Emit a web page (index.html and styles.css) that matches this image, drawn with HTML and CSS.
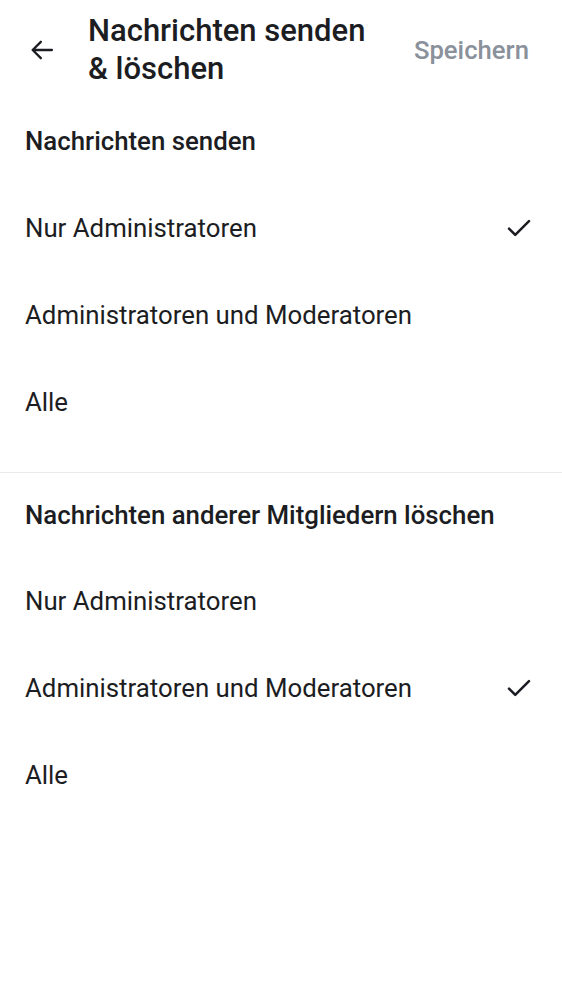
FILE: index.html
```html
<!DOCTYPE html>
<html lang="de">
<head>
<meta charset="utf-8">
<link rel="stylesheet" href="styles.css">
</head>
<body>
<header class="topbar">
  <button class="back" aria-label="Zurück">
    <svg width="28" height="28" viewBox="0 0 24 24" fill="none" stroke="#1c1d22" stroke-width="2" stroke-linecap="round" stroke-linejoin="round"><path d="M20.5 12H4M11 5l-7 7 7 7"/></svg>
  </button>
  <h1 class="title">Nachrichten senden<br>&amp; löschen</h1>
  <span class="save">Speichern</span>
</header>

<section class="group">
  <h2 class="group-title">Nachrichten senden</h2>
  <div class="option"><span>Nur Administratoren</span><svg class="check" width="30" height="30" viewBox="0 0 24 24" fill="none" stroke="#1c1d22" stroke-width="2" stroke-linecap="round" stroke-linejoin="round"><path d="M4 12.5l5 5L20 6.5"/></svg></div>
  <div class="option"><span>Administratoren und Moderatoren</span></div>
  <div class="option"><span>Alle</span></div>
</section>

<section class="group second">
  <h2 class="group-title">Nachrichten anderer Mitgliedern löschen</h2>
  <div class="option"><span>Nur Administratoren</span></div>
  <div class="option"><span>Administratoren und Moderatoren</span><svg class="check" width="30" height="30" viewBox="0 0 24 24" fill="none" stroke="#1c1d22" stroke-width="2" stroke-linecap="round" stroke-linejoin="round"><path d="M4 12.5l5 5L20 6.5"/></svg></div>
  <div class="option"><span>Alle</span></div>
</section>
</body>
</html>
```

FILE: styles.css
```css
html, body {
  margin: 0;
  padding: 0;
  background: #ffffff;
}
body {
  font-family: Roboto, "Noto Sans", sans-serif;
  color: #1c1d22;
  width: 562px;
}
.topbar {
  display: flex;
  align-items: center;
  padding: 12px 33px 10px 28px;
  height: 76px;
}
.back {
  background: none;
  border: 0;
  padding: 0;
  margin: 0;
  width: 28px;
  height: 28px;
  display: flex;
}
.title {
  margin: 0 0 0 32px;
  font-size: 31px;
  line-height: 38px;
  font-weight: 500;
  flex: 1;
  letter-spacing: 0;
}
.save {
  font-size: 25.7px;
  font-weight: 500;
  color: #8a919b;
}
.group {
  padding: 0 25px 27px 25px;
}
.group.second {
  border-top: 1px solid #e8eaee;
}
.group-title {
  margin: 0;
  height: 86px;
  display: flex;
  align-items: center;
  font-size: 25.8px;
  font-weight: 500;
}
.second .group-title {
  height: 84px;
}
.option {
  height: 87px;
  display: flex;
  align-items: center;
  justify-content: space-between;
  font-size: 25.8px;
  font-weight: 400;
}
.check {
  margin-right: 3px;
}
```
